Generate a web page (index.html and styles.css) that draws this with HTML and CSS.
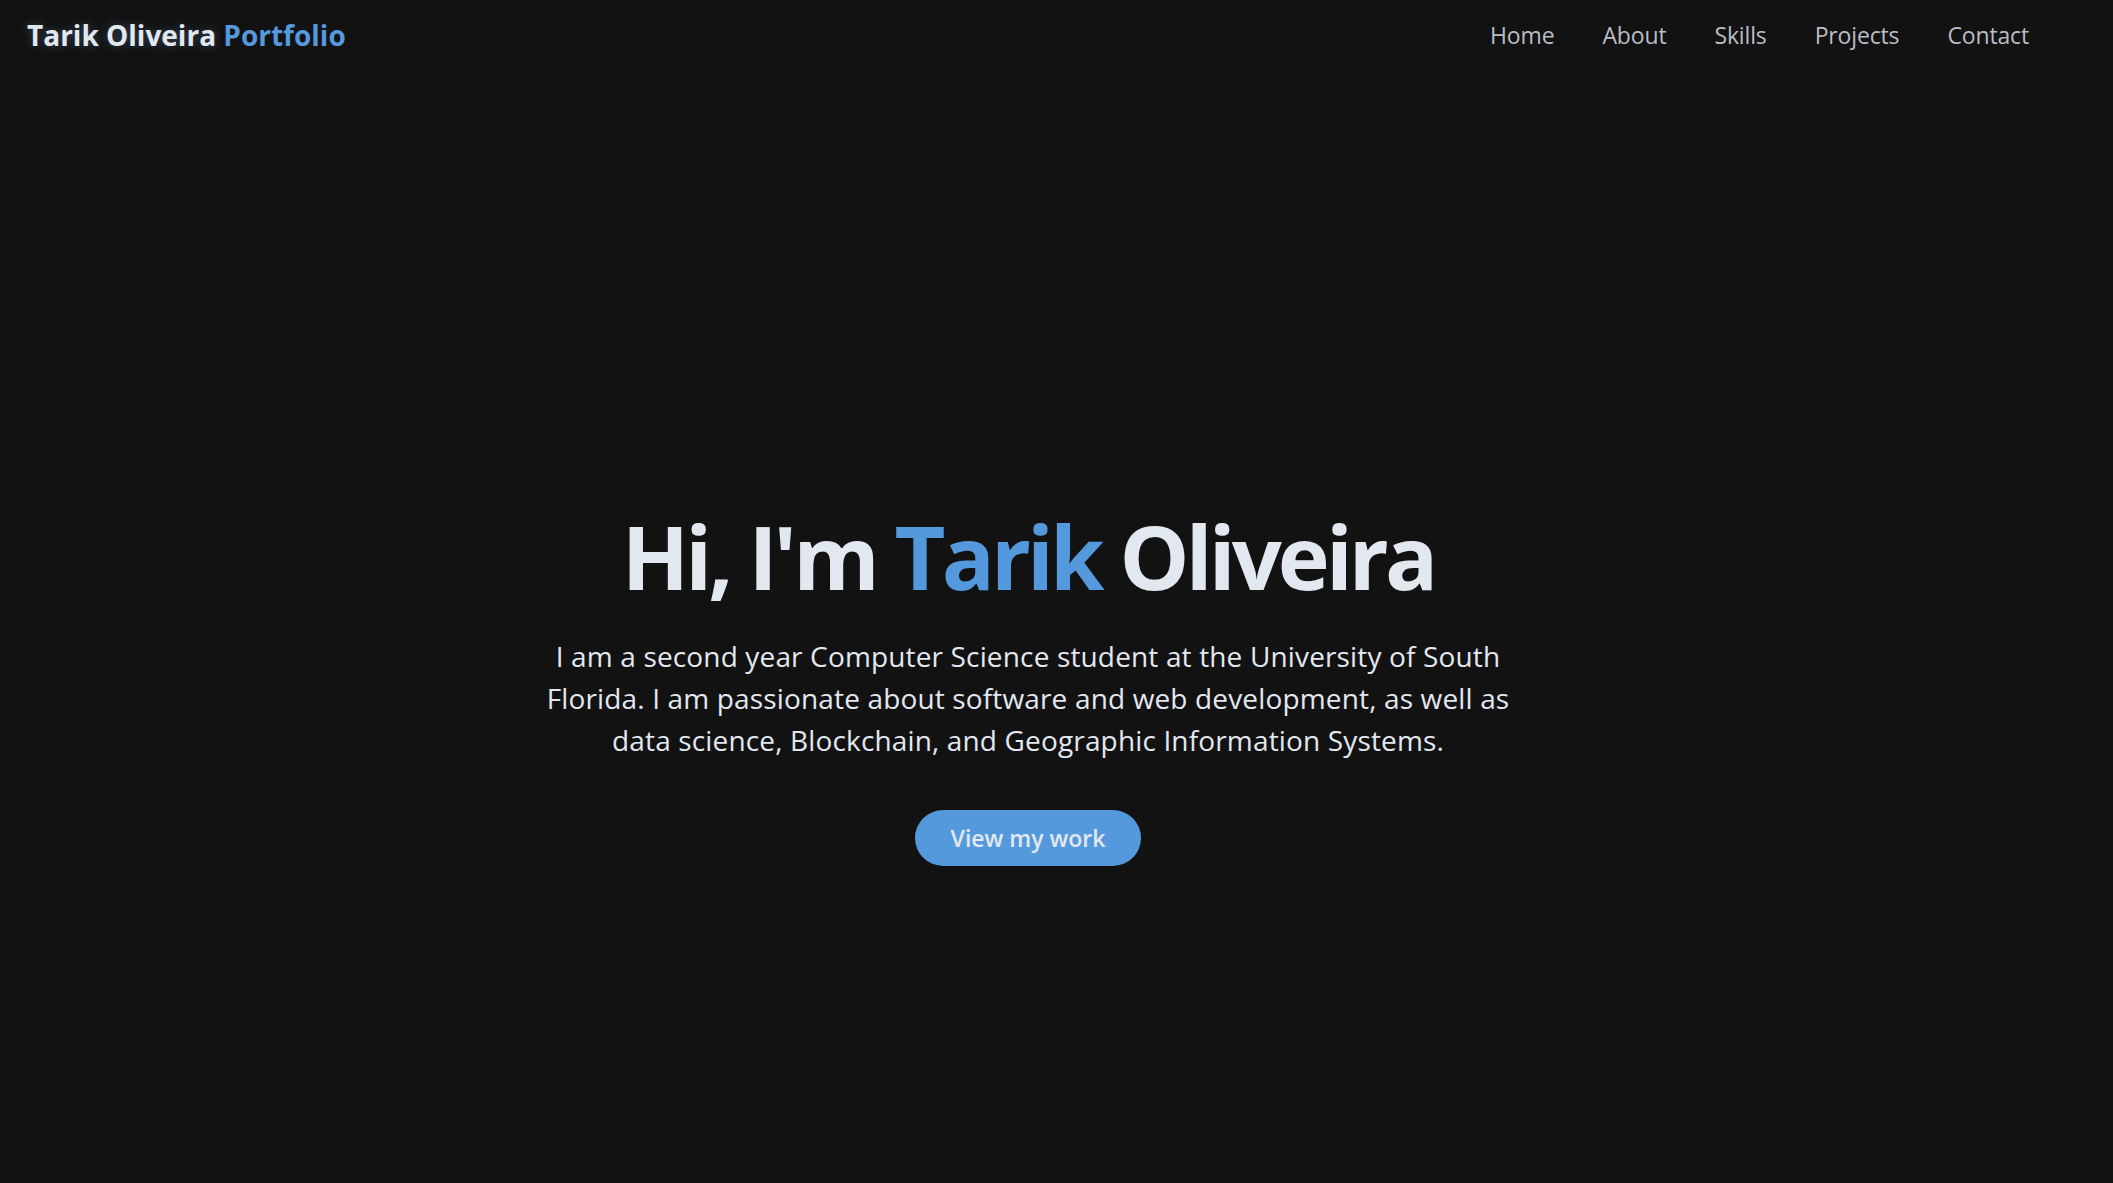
FILE: index.html
```html
<!DOCTYPE html>
<html lang="en">
<head>
<meta charset="utf-8">
<title>Tarik Oliveira Portfolio</title>
<link rel="stylesheet" href="styles.css">
</head>
<body>
<div class="page">
  <header class="topbar">
    <a class="logo" href="#">Tarik Oliveira <span class="accent">Portfolio</span></a>
    <nav class="nav">
      <a href="#">Home</a>
      <a href="#">About</a>
      <a href="#">Skills</a>
      <a href="#">Projects</a>
      <a href="#">Contact</a>
    </nav>
  </header>
  <main class="hero">
    <h1 class="title">Hi, I'm <span class="accent">Tarik</span> Oliveira</h1>
    <p class="intro">I am a second year Computer Science student at the University of South Florida. I am passionate about software and web development, as well as data science, Blockchain, and Geographic Information Systems.</p>
    <a class="cta" href="#">View my work</a>
  </main>
</div>
</body>
</html>
```

FILE: styles.css
```css
* { box-sizing: border-box; }
html, body {
  margin: 0;
  padding: 0;
  background: #121212;
  height: 100%;
}
body {
  font-family: "Open Sans", "Noto Sans", sans-serif;
  color: #e2e8f0;
  overflow: hidden;
}
a { text-decoration: none; }
.page {
  width: 2056px;
  height: 1183px;
  display: flex;
  flex-direction: column;
}
.topbar {
  display: flex;
  justify-content: space-between;
  align-items: center;
  padding: 10px 27px 0 27px;
  height: 60px;
}
.logo {
  font-size: 28px;
  font-weight: 700;
  color: #e2e8f0;
  text-shadow: 0 0 10px rgba(120, 170, 230, 0.35);
}
.accent { color: #5599dd; }
.logo .accent { text-shadow: none; }
.nav {
  display: flex;
  gap: 48px;
}
.nav a {
  font-size: 23px;
  color: #b9bdc6;
  letter-spacing: -0.15px;
}
.hero {
  flex: 1;
  display: flex;
  flex-direction: column;
  align-items: center;
  padding-top: 444px;
}
.title {
  margin: 0;
  font-size: 88px;
  font-weight: 700;
  line-height: 1.2;
  letter-spacing: -3.9px;
}
.intro {
  margin: 25px 0 0 0;
  width: 970px;
  text-align: center;
  font-size: 28px;
  line-height: 42px;
  color: #e2e8f0;
  letter-spacing: 0.15px;
}
.cta {
  margin-top: 49px;
  width: 226px;
  height: 56px;
  border-radius: 28px;
  background: #5599dd;
  color: #e2e8f0;
  font-size: 23px;
  font-weight: 600;
  display: flex;
  align-items: center;
  justify-content: center;
}
```
